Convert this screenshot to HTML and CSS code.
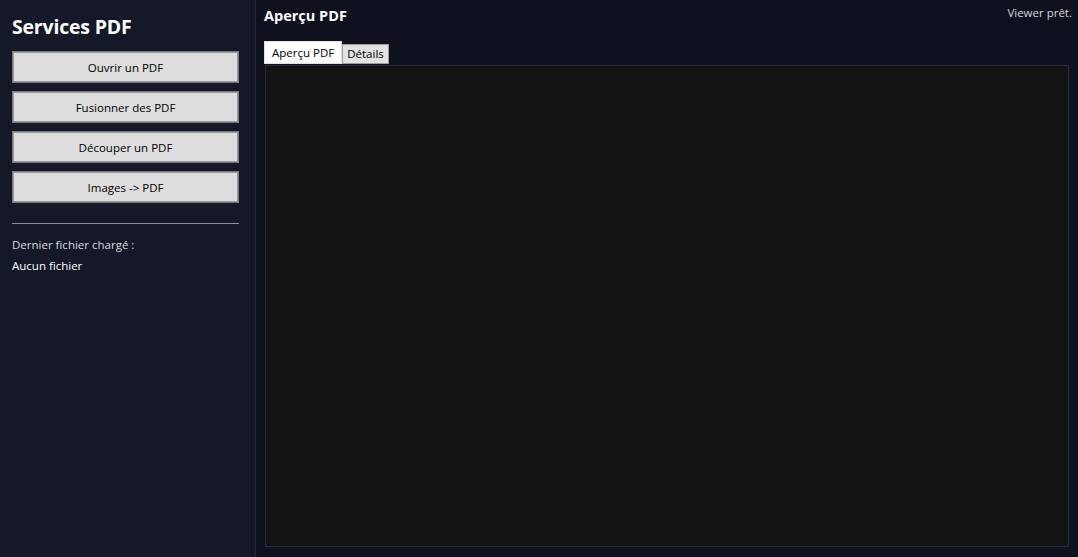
FILE: index.html
```html
<!DOCTYPE html>
<html lang="fr">
<head>
<meta charset="utf-8">
<title>Services PDF</title>
<link rel="stylesheet" href="styles.css">
</head>
<body>
<div class="app">
  <aside class="sidebar">
    <h1 class="brand">Services PDF</h1>
    <div class="actions">
      <button class="btn">Ouvrir un PDF</button>
      <button class="btn">Fusionner des PDF</button>
      <button class="btn">Découper un PDF</button>
      <button class="btn">Images -&gt; PDF</button>
    </div>
    <hr class="sep">
    <div class="last-label">Dernier fichier chargé :</div>
    <div class="last-value">Aucun fichier</div>
  </aside>
  <main class="main">
    <div class="topbar">
      <h2 class="title">Aperçu PDF</h2>
      <span class="status">Viewer prêt.</span>
    </div>
    <div class="tabs">
      <button class="tab active">Aperçu PDF</button>
      <button class="tab">Détails</button>
    </div>
    <div class="viewer"></div>
  </main>
</div>
</body>
</html>
```
FILE: styles.css
```css
html, body {
  margin: 0;
  height: 100%;
}
body {
  font-family: "Open Sans", "Noto Sans", sans-serif;
  background: #0f121e;
  color: #fff;
}
.app {
  display: flex;
  height: 100vh;
}
.sidebar {
  width: 227px;
  flex: none;
  background: #141829;
  border-right: 1px solid #252838;
  padding: 12px 16px 12px 12px;
  display: flex;
  flex-direction: column;
}
.brand {
  margin: 0;
  font-size: 19.5px;
  font-weight: 700;
  line-height: 30px;
  letter-spacing: -0.2px;
}
.actions {
  display: flex;
  flex-direction: column;
  gap: 8px;
  margin-top: 9px;
}
.btn {
  height: 32px;
  background: #dddddd;
  border: 1px solid #7a7a7a;
  box-shadow: inset 0 0 0 1px #9a9a9a;
  color: #000;
  font-family: inherit;
  font-size: 11.5px;
  padding: 0;
}
.sep {
  border: none;
  border-top: 1px solid #8d909b;
  margin: 20px 0 0;
}
.last-label {
  margin-top: 12px;
  font-size: 11.5px;
  color: #d8d9de;
  line-height: 18px;
}
.last-value {
  margin-top: 3px;
  font-size: 11.5px;
  color: #fff;
  line-height: 18px;
}
.main {
  flex: 1;
  display: flex;
  flex-direction: column;
  padding: 4px 6px 10px 8px;
  min-width: 0;
}
.topbar {
  display: flex;
  justify-content: space-between;
  align-items: flex-start;
}
.title {
  margin: 0;
  font-size: 14.5px;
  font-weight: 700;
  line-height: 24px;
}
.status {
  font-size: 11.5px;
  color: #d4d6dd;
  line-height: 18px;
}
.tabs {
  display: flex;
  align-items: flex-end;
  margin-top: 13px;
}
.tab {
  font-family: inherit;
  font-size: 11.5px;
  color: #000;
  background: #e3e3e3;
  border: 1px solid #9d9d9d;
  padding: 0 4px;
  height: 20px;
  line-height: 18px;
}
.tab.active {
  background: #fff;
  height: 23px;
  padding: 0 7px;
  border-color: #e0e0e0;
}
.viewer {
  flex: 1;
  margin: 1px 3px 0 1px;
  background: #131313;
  border: 1px solid #262a45;
}
```
